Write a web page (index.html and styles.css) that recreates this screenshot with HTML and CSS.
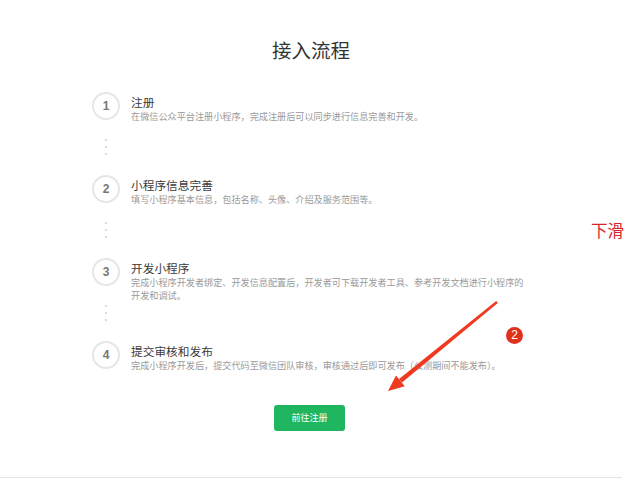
FILE: index.html
```html
<!DOCTYPE html>
<html lang="zh-CN">
<head>
    <meta charset="utf-8">
    <meta name="viewport" content="width=device-width, initial-scale=1">
    <title>接入流程</title>
    <link rel="stylesheet" href="styles.css">
</head>
<body>
    <div class="page">
        <h1 class="page-title">接入流程</h1>
        <ol class="steps">
            <li class="step">
                <div class="mark">
                    <span class="num">1</span>
                    <span class="dots"><i></i><i></i><i></i></span>
                </div>
                <div class="info">
                    <h2>注册</h2>
                    <p>在微信公众平台注册小程序，完成注册后可以同步进行信息完善和开发。</p>
                </div>
            </li>
            <li class="step">
                <div class="mark">
                    <span class="num">2</span>
                    <span class="dots"><i></i><i></i><i></i></span>
                </div>
                <div class="info">
                    <h2>小程序信息完善</h2>
                    <p>填写小程序基本信息，包括名称、头像、介绍及服务范围等。</p>
                </div>
            </li>
            <li class="step">
                <div class="mark">
                    <span class="num">3</span>
                    <span class="dots"><i></i><i></i><i></i></span>
                </div>
                <div class="info">
                    <h2>开发小程序</h2>
                    <p>完成小程序开发者绑定、开发信息配置后，开发者可下载开发者工具、参考开发文档进行小程序的开发和调试。</p>
                </div>
            </li>
            <li class="step">
                <div class="mark">
                    <span class="num">4</span>
                </div>
                <div class="info">
                    <h2>提交审核和发布</h2>
                    <p>完成小程序开发后，提交代码至微信团队审核，审核通过后即可发布（公测期间不能发布）。</p>
                </div>
            </li>
        </ol>
        <div class="actions">
            <a class="btn" href="#">前往注册</a>
        </div>
    </div>

    <!-- annotations drawn over the screenshot -->
    <span class="note-scroll">下滑</span>
    <span class="note-badge">2</span>
    <svg class="note-arrow" width="640" height="480" viewBox="0 0 640 480">
        <polygon points="496.2,301 497.8,303 402,382.5 399,379" fill="#ef3a22"/>
        <polygon points="388,391 396,375.5 404.8,386.3" fill="#ef3a22"/>
    </svg>
</body>
</html>
```

FILE: styles.css
```css
body {
    margin: 0;
    background: #fff;
    font-family: "Noto Sans CJK SC", "Liberation Sans", sans-serif;
    color: #333;
}

.page {
    width: 622px;
    height: 478px;
    box-sizing: border-box;
    padding-top: 37px;
    border-bottom: 1px solid #e4e4e4;
}

.page-title {
    margin: 0;
    font-size: 19.5px;
    line-height: 26px;
    font-weight: normal;
    text-align: center;
    color: #333;
}

.steps {
    list-style: none;
    margin: 29px 0 0 92px;
    padding: 0;
    width: 440px;
}

.step {
    display: flex;
    gap: 11px;
    height: 83px;
}

.step:last-child {
    height: 40px;
}

.mark {
    display: flex;
    flex-direction: column;
    align-items: center;
    width: 28px;
    flex-shrink: 0;
}

.num {
    width: 28px;
    height: 28px;
    box-sizing: border-box;
    border: 2px solid #e6e6e6;
    border-radius: 50%;
    display: flex;
    align-items: center;
    justify-content: center;
    font-family: "Liberation Sans", Arial, sans-serif;
    font-weight: bold;
    font-size: 12px;
    color: #777;
}

.dots {
    display: flex;
    flex-direction: column;
    gap: 5px;
    margin-top: 19px;
}

.dots i {
    width: 2px;
    height: 2px;
    border-radius: 1px;
    background: #cfcfcf;
}

.info {
    padding-top: 0.5px;
    width: 396px;
}

.info h2 {
    margin: 0;
    font-size: 11.7px;
    line-height: 17px;
    font-weight: normal;
    color: #3a3a3a;
}

.info p {
    margin: 0;
    font-size: 9.15px;
    line-height: 13.5px;
    color: #9a9a9a;
}

.actions {
    display: flex;
    justify-content: center;
    margin-top: 24px;
    padding-right: 3px;
}

.btn {
    display: block;
    width: 71px;
    height: 26px;
    line-height: 26px;
    border-radius: 3px;
    background: #1fb65f;
    color: #fff;
    text-align: center;
    font-size: 9px;
    text-decoration: none;
}

.note-scroll {
    position: absolute;
    left: 591px;
    top: 219px;
    font-size: 16.5px;
    line-height: 22px;
    color: #d8242b;
}

.note-badge {
    position: absolute;
    left: 506px;
    top: 327px;
    width: 17px;
    height: 17px;
    border-radius: 50%;
    background: #e0311d;
    color: #fff;
    font-family: "Liberation Sans", Arial, sans-serif;
    font-size: 12px;
    line-height: 17px;
    text-align: center;
}

.note-arrow {
    position: absolute;
    left: 0;
    top: 0;
    pointer-events: none;
}
```
